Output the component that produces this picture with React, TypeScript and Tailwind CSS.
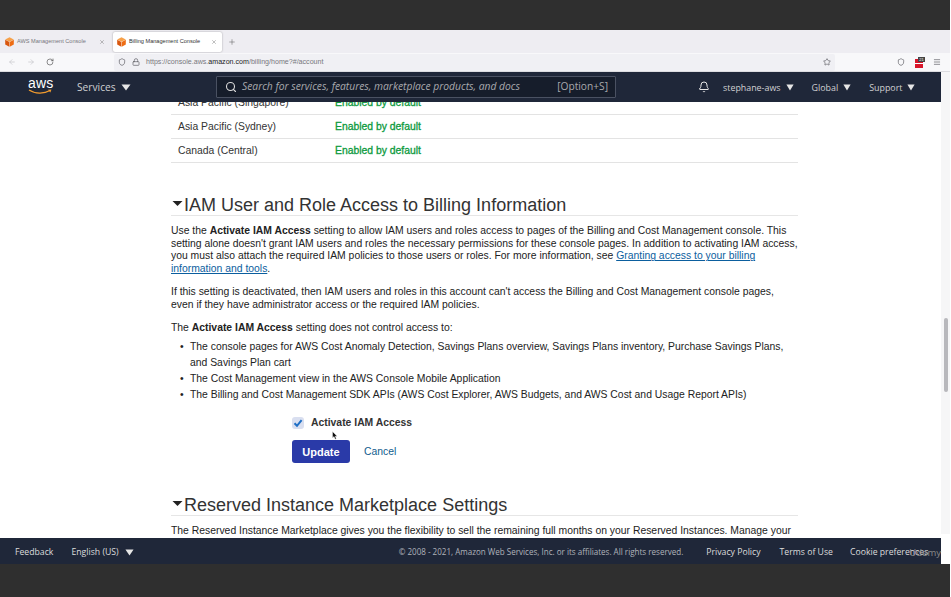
import React from "react";
import { X, Plus, ArrowLeft, ArrowRight, RotateCw, Shield, Lock, Star, Search, Bell, Menu } from "lucide-react";

const Caret = ({ className = "", w = 10 }: { className?: string; w?: number }) => (
  <svg width={w} height="7" viewBox="0 0 10 7" preserveAspectRatio="none" className={className}>
    <path d="M0.5 0.5h9L5 6.5z" fill="currentColor" />
  </svg>
);

const Cube = () => (
  <svg width="9" height="10" viewBox="0 0 9 10" className="shrink-0">
    <path d="M4.5 0.2 8.8 2.5 4.5 4.8 0.2 2.5z" fill="#f7a14a" />
    <path d="M0.2 2.8 4.3 5V9.8L0.2 7.5z" fill="#d9570f" />
    <path d="M8.8 2.8 4.7 5V9.8L8.8 7.5z" fill="#ee6c13" />
  </svg>
);

const Tab = ({ title, active }: { title: string; active?: boolean }) => (
  <div
    className={
      "flex items-center h-[20px] w-[109px] pl-[4px] pr-[5px] gap-[3px] rounded-[2px] " +
      (active ? "bg-white shadow-[0_0_2px_rgba(0,0,0,0.35)]" : "")
    }
  >
    <Cube />
    <span className={"flex-1 text-[5.6px] whitespace-nowrap " + (active ? "text-[#333]" : "text-[#77777c]")}>{title}</span>
    <X size={6} strokeWidth={1.5} className="text-[#555] shrink-0" />
  </div>
);

const NavItem = ({ label }: { label: string }) => (
  <div className="flex items-center gap-[5px]">
    <span>{label}</span>
    <Caret w={8} className="text-[#e6e6e6]" />
  </div>
);

const Region = ({ name, last }: { name: string; last?: boolean }) => (
  <div className={"flex items-center pl-[7px] pt-[1px] border-t border-[#e3e3e3] " + (last ? "border-b h-[25px]" : "h-[24px]")}>
    <span className="w-[157px] text-[#333]">{name}</span>
    <span className="text-[#0d9a3e] [-webkit-text-stroke:0.3px_#0d9a3e]">Enabled by default</span>
  </div>
);

const Heading = ({ title }: { title: string }) => (
  <div className="flex items-end h-[26px] border-b border-[#e6e6e6]">
    <div className="flex items-center h-[20px]">
      <svg width="11" height="5" viewBox="0 0 11 5" className="ml-[1px] mr-[1px] -mt-[3px] shrink-0">
        <path d="M0.5 0h10L5.5 5z" fill="#222" />
      </svg>
      <span className="text-[18px] leading-[20px] text-[#333] whitespace-nowrap">{title}</span>
    </div>
  </div>
);

export default function App() {
  return (
    <div
      className="w-[951px] h-[597px] flex flex-col overflow-hidden bg-white"
      style={{ fontFamily: '"Liberation Sans", Arial, sans-serif' }}
    >
      <div className="h-[30px] shrink-0 w-[950px] bg-[#2f2f2f]" />

      {/* tab strip */}
      <div className="h-[23px] shrink-0 w-[950px] bg-[#eeedf2] flex items-center pl-[1px] gap-[3px]">
        <Tab title="AWS Management Console" />
        <Tab title="Billing Management Console" active />
        <Plus size={8} strokeWidth={1.5} className="ml-[3px] text-[#555]" />
      </div>

      {/* url toolbar */}
      <div className="h-[19px] shrink-0 w-[950px] bg-[#f8f8fa] flex items-center border-b border-[#dcdce0]">
        <div className="flex items-center w-[114px] pl-[8px] gap-[11px]">
          <ArrowLeft size={8} className="text-[#c4c4c8]" />
          <ArrowRight size={8} className="text-[#c4c4c8]" />
          <RotateCw size={8} className="text-[#555]" />
        </div>
        <div className="flex items-center w-[721px] h-[17px] bg-[#f0f0f4] rounded-[2px] pl-[4px] pr-[3px] gap-[5px]">
          <Shield size={8} className="text-[#5b5b60]" />
          <Lock size={8} className="text-[#5b5b60] ml-[1px]" />
          <span className="flex-1 ml-[1px] text-[7.1px] text-[#77777c] whitespace-nowrap">
            https://console.aws.<span className="text-[#222]">amazon.com</span>/billing/home?#/account
          </span>
          <Star size={8} className="text-[#5b5b60] mr-[1px]" />
        </div>
        <div className="flex items-center pl-[62px] gap-[10px]">
          <Shield size={8} className="text-[#5b5b60]" />
          <div className="relative w-[8px] h-[9px] mt-[2px] bg-[#d8152a] flex items-center">
            <div className="w-full h-[1px] bg-white" />
            <span className="absolute -top-[2px] -right-[2px] w-[7px] h-[5px] bg-[#444] text-[4px] leading-[5px] text-white text-center">
              21
            </span>
          </div>
          <Menu size={8} className="text-[#5b5b60]" />
        </div>
      </div>

      {/* main window */}
      <div className="flex flex-1 min-h-0">
        <div className="w-[941px] flex flex-col shrink-0">
          {/* aws nav */}
          <div className="h-[30px] shrink-0 bg-[#1f2739] flex items-center text-[#d0d0d2] text-[10.2px] relative z-10" style={{ fontFamily: '"Open Sans", sans-serif' }}>
            <div className="w-[77px] pl-[28px] shrink-0 flex flex-col items-start -mt-[2px]">
              <span className="text-[14px] leading-[11px] text-white tracking-[0.2px]" style={{ fontFamily: '"Liberation Sans", sans-serif' }}>aws</span>
              <svg width="25" height="6" viewBox="0 0 25 6">
                <path d="M1 1c6 4 15 4 21 0.6" stroke="#f09a2e" strokeWidth="1.2" fill="none" />
                <path d="M20 0.8l3.4-0.3-1 3z" fill="#f09a2e" />
              </svg>
            </div>
            <div className="w-[139px] shrink-0 pt-[1px]">
              <div className="flex items-center gap-[5px]">
                <span>Services</span>
                <Caret className="text-[#e6e6e6]" />
              </div>
            </div>
            <div className="w-[400px] h-[22px] shrink-0 bg-[#161d2b] border border-[#4a5162] rounded-[1px] flex items-center pl-[8px] pr-[7px] text-[#a9a9ad]">
              <Search size={12} strokeWidth={2.2} className="text-[#dcdcdc] shrink-0" />
              <span className="flex-1 ml-[5px] italic text-[10.3px] whitespace-nowrap">Search for services, features, marketplace products, and docs</span>
              <span className="whitespace-nowrap">[Option+S]</span>
            </div>
            <div className="ml-[82px] flex items-center pt-[1px]">
              <Bell size={12} className="text-[#e6e6e6] mr-[13px]" />
              <div className="flex items-center gap-[18px] text-[8.9px]">
                <NavItem label="stephane-aws" />
                <NavItem label="Global" />
                <NavItem label="Support" />
              </div>
            </div>
          </div>

          {/* content */}
          <div className="flex-1 min-h-0 bg-white overflow-hidden pl-[171px] pr-[143px] text-[10.38px] leading-[12.7px] text-[#222]">
            <div className="-mt-[12px]">
              <Region name="Asia Pacific (Singapore)" />
              <Region name="Asia Pacific (Sydney)" />
              <Region name="Canada (Central)" last />
            </div>

            <div className="mt-[27px]">
              <Heading title="IAM User and Role Access to Billing Information" />
            </div>

            <p className="mt-[9px]">
              Use the <b>Activate IAM Access</b> setting to allow IAM users and roles access to pages of the Billing and Cost Management console. This setting alone doesn't grant IAM users and roles the necessary permissions for these console pages. In addition to activating IAM access, you must also attach the required IAM policies to those users or roles. For more information, see{" "}
              <span className="text-[#0b5e9e] underline">Granting access to your billing information and tools</span>.
            </p>
            <p className="mt-[10px]">
              If this setting is deactivated, then IAM users and roles in this account can't access the Billing and Cost Management console pages, even if they have administrator access or the required IAM policies.
            </p>
            <p className="mt-[11px]">
              The <b>Activate IAM Access</b> setting does not control access to:
            </p>
            <ul className="mt-[4px] leading-[16px]">
              {[
                "The console pages for AWS Cost Anomaly Detection, Savings Plans overview, Savings Plans inventory, Purchase Savings Plans, and Savings Plan cart",
                "The Cost Management view in the AWS Console Mobile Application",
                "The Billing and Cost Management SDK APIs (AWS Cost Explorer, AWS Budgets, and AWS Cost and Usage Report APIs)",
              ].map((t) => (
                <li key={t} className="flex">
                  <span className="w-[19px] shrink-0 pl-[9px]">•</span>
                  <span>{t}</span>
                </li>
              ))}
            </ul>

            <div className="mt-[13px] pl-[121px] flex items-center gap-[7px] h-[14px]">
              <span className="w-[12px] h-[12px] bg-[#d9dff0] rounded-[3px] flex items-center justify-center">
                <svg width="10" height="10" viewBox="0 0 10 10">
                  <path d="M1.5 5.2 4 7.8 8.6 2.2" stroke="#1f6fc5" strokeWidth="2" fill="none" />
                </svg>
              </span>
              <b className="text-[#333]">Activate IAM Access</b>
            </div>

            <div className="mt-[10px] pl-[121px] flex items-center h-[23px] relative">
              <span className="w-[58px] h-[23px] pt-[1px] rounded-[3px] bg-[#2a3aa8] text-white font-bold text-[11px] flex items-center justify-center">
                Update
              </span>
              <span className="ml-[14px] pt-[1px] text-[#0f5c8e]">Cancel</span>
              <svg width="6" height="9" viewBox="0 0 6 9" className="absolute left-[161px] -top-[9px]">
                <path d="M0.5 0.5V7L2 5.6 3.2 8.2 4.3 7.7 3.2 5.2H5.2z" fill="#111" stroke="#fff" strokeWidth="0.4" />
              </svg>
            </div>

            <div className="mt-[27px]">
              <Heading title="Reserved Instance Marketplace Settings" />
            </div>
            <p className="mt-[8px] leading-[14px]">
              The Reserved Instance Marketplace gives you the flexibility to sell the remaining full months on your Reserved Instances. Manage your Reserved Instance Marketplace settings here.
            </p>
          </div>

          {/* footer */}
          <div className="h-[26px] shrink-0 bg-[#1f2739] flex items-center pl-[15px] pt-[3px] text-[#dcdcdc] text-[8.7px] relative" style={{ fontFamily: '"Open Sans", sans-serif' }}>
            <span>Feedback</span>
            <div className="ml-[18px] flex items-center gap-[6px]">
              <span>English (US)</span>
              <Caret w={9} className="text-[#e6e6e6]" />
            </div>
            <span className="ml-[265px] text-[8.05px] text-[#b0b3ba] whitespace-nowrap">© 2008 - 2021, Amazon Web Services, Inc. or its affiliates. All rights reserved.</span>
            <span className="ml-[23px] whitespace-nowrap">Privacy Policy</span>
            <span className="ml-[19px] whitespace-nowrap">Terms of Use</span>
            <span className="ml-[17px] whitespace-nowrap">Cookie preferences</span>
            <span className="absolute right-0 top-[8px] text-[9.5px] text-[#8a8a8a]">Udemy</span>
          </div>
        </div>

        {/* scrollbar */}
        <div className="w-[9px] h-[462px] bg-[#f6f6f7] flex justify-center shrink-0">
          <div className="mt-[246px] w-[4px] h-[74px] rounded-[2px] bg-[#b8b8bc]" />
        </div>
      </div>

      <div className="h-[33px] shrink-0 w-[950px] bg-[#2f2f2f]" />
    </div>
  );
}
